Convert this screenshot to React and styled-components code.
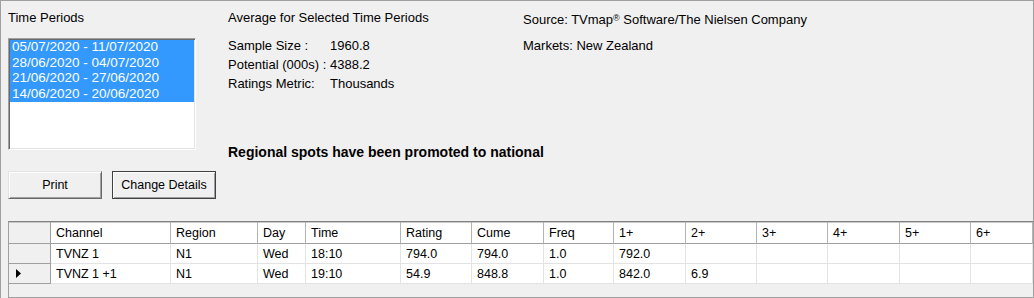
import React from 'react'
import styled, { createGlobalStyle } from 'styled-components'

const GlobalStyle = createGlobalStyle`
  html, body {
    margin: 0;
    padding: 0;
    background: #f0f0f0;
  }

  body {
    font-family: 'Liberation Sans', Arial, sans-serif;
    color: #000;
  }
`

const Window = styled.div`
  box-sizing: border-box;
  width: 1034px;
  height: 298px;
  padding: 9px 0 0 7px;
  border: 1px solid #a0a0a0;
  border-bottom: none;
  background: #f0f0f0;
  overflow: hidden;
`

const TopArea = styled.div`
  display: flex;
  align-items: flex-start;
`

const LeftCol = styled.div`
  display: flex;
  flex-direction: column;
  width: 188px;
`

const MidCol = styled.div`
  display: flex;
  flex-direction: column;
  width: 295px;
  margin-left: 32px;
`

const RightCol = styled.div`
  display: flex;
  flex-direction: column;
`

const Label = styled.div`
  font-size: 13px;
  line-height: 16px;
  height: 16px;
  white-space: nowrap;
`

const ListBox = styled.div`
  box-sizing: border-box;
  width: 188px;
  height: 112px;
  margin-top: 12px;
  padding: 1px;
  background: #fff;
  border: 1px solid;
  border-color: #a0a0a0 #fff #fff #a0a0a0;
  box-shadow: inset 1px 1px #696969, inset -1px -1px #e3e3e3;
`

const ListItem = styled.div`
  height: 13px;
  padding: 0 0 2.5px 2px;
  font-size: 13.5px;
  line-height: 13px;
  white-space: nowrap;
  background: ${p => (p.$selected ? '#3399ff' : 'transparent')};
  color: ${p => (p.$selected ? '#fff' : '#000')};
`

const ButtonRow = styled.div`
  display: flex;
  gap: 10px;
  margin-top: 21px;
`

const Button = styled.button`
  box-sizing: border-box;
  flex: 0 0 auto;
  width: ${p => p.$width}px;
  height: 28px;
  padding: 0;
  font-family: 'Liberation Sans', Arial, sans-serif;
  font-size: 12.5px;
  color: #000;
  background: #f0f0f0;
  border: 1px solid;
  border-color: ${p =>
    p.$default ? '#404040' : '#e3e3e3 #696969 #696969 #e3e3e3'};
  box-shadow: inset 1px 1px #fff, inset -1px -1px #a0a0a0;
`

const StatsGrid = styled.div`
  display: grid;
  grid-template-columns: 102px auto;
  grid-auto-rows: 19px;
  margin-top: 10px;
  font-size: 13px;
  line-height: 19px;
  white-space: nowrap;
`

const Notice = styled.div`
  margin-top: 50px;
  font-size: 14px;
  font-weight: bold;
  line-height: 18px;
  white-space: nowrap;
`

const Markets = styled.div`
  margin-top: 10px;
  font-size: 13px;
  line-height: 19px;
`

const Reg = styled.span`
  font-size: 9px;
  vertical-align: 3px;
`

const DataGrid = styled.div`
  box-sizing: border-box;
  height: 77px;
  margin-top: 22px;
  background: #f0f0f0;
  border-top: 1px solid #828282;
  border-left: 1px solid #a0a0a0;
  border-bottom: 1px solid #a0a0a0;
`

const Table = styled.div`
  display: grid;
  grid-template-columns: 42px 120px 87px 48px 95px 71px 72px 70px 72px 71px 71px 72px 71px 1fr;
  font-size: 12.5px;
`

const BaseCell = styled.div`
  box-sizing: border-box;
  display: flex;
  align-items: center;
  padding-left: 5px;
  white-space: nowrap;
  overflow: hidden;
`

const HeaderCell = styled(BaseCell)`
  height: 22px;
  background: #fff;
  border-right: 1px solid #b4b4b4;
  border-bottom: 1px solid #a0a0a0;
  box-shadow: inset 0 1px #c8c8c8;
`

const CornerCell = styled(BaseCell)`
  height: 22px;
  background: #f0f0f0;
  border-right: 1px solid #a0a0a0;
  border-bottom: 1px solid #a0a0a0;
  box-shadow: inset 0 1px #c8c8c8;
`

const RowHeaderCell = styled(BaseCell)`
  height: 20px;
  padding-left: 7px;
  background: #f0f0f0;
  border-right: 1px solid #a0a0a0;
  border-bottom: 1px solid #a0a0a0;
`

const Cell = styled(BaseCell)`
  height: 20px;
  background: #fff;
  border-right: 1px solid #e3e3e3;
  border-bottom: 1px solid #e3e3e3;
`

const periods = [
  '05/07/2020 - 11/07/2020',
  '28/06/2020 - 04/07/2020',
  '21/06/2020 - 27/06/2020',
  '14/06/2020 - 20/06/2020',
]

const stats = [
  { label: 'Sample Size :', value: '1960.8' },
  { label: 'Potential (000s) :', value: '4388.2' },
  { label: 'Ratings Metric:', value: 'Thousands' },
]

const columns = [
  'Channel',
  'Region',
  'Day',
  'Time',
  'Rating',
  'Cume',
  'Freq',
  '1+',
  '2+',
  '3+',
  '4+',
  '5+',
  '6+',
]

const rows = [
  ['TVNZ 1', 'N1', 'Wed', '18:10', '794.0', '794.0', '1.0', '792.0', '', '', '', '', ''],
  ['TVNZ 1 +1', 'N1', 'Wed', '19:10', '54.9', '848.8', '1.0', '842.0', '6.9', '', '', '', ''],
]

const currentRow = 1

const RowArrow = () => (
  <svg width="6" height="9" viewBox="0 0 6 9">
    <path d="M0 0 L5 4.5 L0 9 Z" fill="#000" />
  </svg>
)

const App = () => (
  <>
    <GlobalStyle />
    <Window>
      <TopArea>
        <LeftCol>
          <Label>Time Periods</Label>
          <ListBox>
            {periods.map(p => (
              <ListItem key={p} $selected>
                {p}
              </ListItem>
            ))}
          </ListBox>
          <ButtonRow>
            <Button $width={94}>Print</Button>
            <Button $width={104} $default>
              Change Details
            </Button>
          </ButtonRow>
        </LeftCol>

        <MidCol>
          <Label>Average for Selected Time Periods</Label>
          <StatsGrid>
            {stats.map(s => (
              <React.Fragment key={s.label}>
                <span>{s.label}</span>
                <span>{s.value}</span>
              </React.Fragment>
            ))}
          </StatsGrid>
          <Notice>Regional spots have been promoted to national</Notice>
        </MidCol>

        <RightCol>
          <Label>
            Source: TVmap<Reg>®</Reg> Software/The Nielsen Company
          </Label>
          <Markets>Markets: New Zealand</Markets>
        </RightCol>
      </TopArea>

      <DataGrid>
        <Table>
          <CornerCell />
          {columns.map(c => (
            <HeaderCell key={c}>{c}</HeaderCell>
          ))}
          {rows.map((row, i) => (
            <React.Fragment key={row[0]}>
              <RowHeaderCell>{i === currentRow && <RowArrow />}</RowHeaderCell>
              {row.map((value, j) => (
                <Cell key={columns[j]}>{value}</Cell>
              ))}
            </React.Fragment>
          ))}
        </Table>
      </DataGrid>
    </Window>
  </>
)

export default App
